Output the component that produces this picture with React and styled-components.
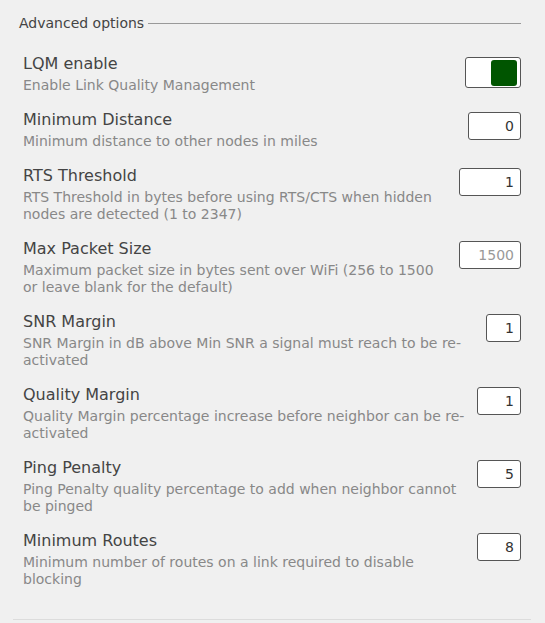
import React, { useState } from "react";
import styled, { createGlobalStyle } from "styled-components";

const GlobalStyle = createGlobalStyle`
  html, body {
    margin: 0;
    padding: 0;
    background: #f0f0f0;
    font-family: "DejaVu Sans", "Liberation Sans", sans-serif;
  }
`;

// the rows of the advanced section
const options = [
  { key: "lqm", title: "LQM enable", desc: "Enable Link Quality Management", toggle: true },
  { key: "mindist", title: "Minimum Distance", desc: "Minimum distance to other nodes in miles", value: "0", width: 53 },
  { key: "rts", title: "RTS Threshold", desc: "RTS Threshold in bytes before using RTS/CTS when hidden nodes are detected (1 to 2347)", value: "1", width: 62 },
  { key: "mtu", title: "Max Packet Size", desc: "Maximum packet size in bytes sent over WiFi (256 to 1500 or leave blank for the default)", value: "", placeholder: "1500", width: 62 },
  { key: "snr", title: "SNR Margin", desc: "SNR Margin in dB above Min SNR a signal must reach to be re-activated", value: "1", width: 35 },
  { key: "quality", title: "Quality Margin", desc: "Quality Margin percentage increase before neighbor can be re-activated", value: "1", width: 44 },
  { key: "ping", title: "Ping Penalty", desc: "Ping Penalty quality percentage to add when neighbor cannot be pinged", value: "5", width: 44 },
  { key: "routes", title: "Minimum Routes", desc: "Minimum number of routes on a link required to disable blocking", value: "8", width: 44 },
];

export default () => {
  const [lqm, setLqm] = useState(true);

  return (
    <>
      <GlobalStyle />
      <Section>
        <Legend>
          <LegendText>Advanced options</LegendText>
          <LegendRule />
        </Legend>

        {options.map(opt => (
          <Row key={opt.key}>
            <LabelColumn>
              <Title>{opt.title}</Title>
              <Description>{opt.desc}</Description>
            </LabelColumn>
            {opt.toggle ? (
              <Toggle $on={lqm} onClick={() => setLqm(!lqm)}>
                <Knob $on={lqm} />
              </Toggle>
            ) : (
              <NumberInput
                $width={opt.width}
                defaultValue={opt.value}
                placeholder={opt.placeholder}
              />
            )}
          </Row>
        ))}
      </Section>
    </>
  );
};

const Section = styled.div`
  width: 518px;
  margin-left: 13px;
  padding-bottom: 25px;
  border-bottom: 1px solid #dcdcdc;
`;

const Legend = styled.div`
  display: flex;
  align-items: center;
  margin-top: 14px;
  padding: 0 10px 0 6px;
  height: 18px;
  margin-bottom: 12px;
`;

const LegendText = styled.span`
  font-size: 14px;
  color: #444;
  line-height: 18px;
`;

const LegendRule = styled.div`
  flex: 1;
  height: 1px;
  background: #999;
  margin-left: 4px;
`;

const Row = styled.div`
  display: flex;
  align-items: flex-start;
  gap: 12px;
  padding: 9px 10px 6px 10px;
`;

const LabelColumn = styled.div`
  flex: 1;
  min-width: 0;
`;

const Title = styled.div`
  font-size: 16px;
  line-height: 22px;
  margin-bottom: 2px;
  color: #444;
`;

const Description = styled.div`
  font-size: 14px;
  line-height: 17px;
  color: #888;
`;

const NumberInput = styled.input`
  box-sizing: border-box;
  width: ${p => p.$width}px;
  height: 28px;
  margin-top: 3px;
  border: 1px solid #555;
  border-radius: 3px;
  background: #fff;
  padding: 0 6px;
  font-family: "DejaVu Sans", sans-serif;
  font-size: 14px;
  color: #333;
  text-align: right;
  outline: none;

  &::placeholder {
    color: #999;
  }
`;

const Toggle = styled.div`
  box-sizing: border-box;
  width: 56px;
  height: 31px;
  margin-top: 4px;
  border: 1px solid #555;
  border-radius: 3px;
  background: #fff;
  display: flex;
  justify-content: ${p => (p.$on ? "flex-end" : "flex-start")};
  align-items: center;
  padding: 0 3px;
  cursor: pointer;
`;

const Knob = styled.div`
  width: 26px;
  height: 26px;
  border-radius: 3px;
  background: ${p => (p.$on ? "#005500" : "#bbb")};
`;
